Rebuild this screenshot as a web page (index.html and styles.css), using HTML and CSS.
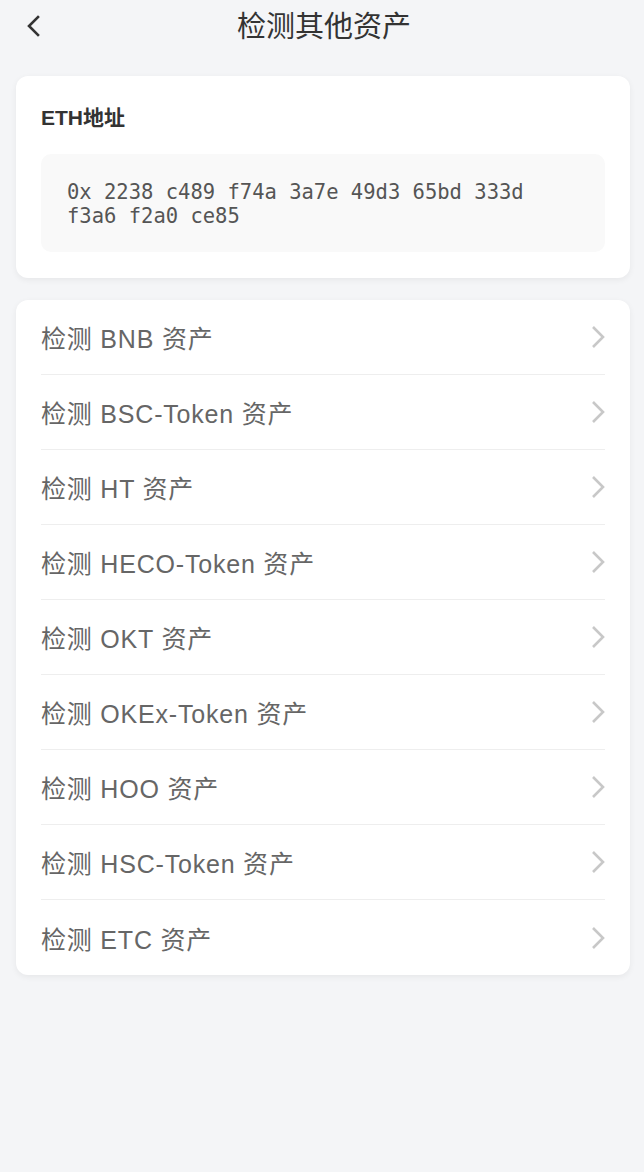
FILE: index.html
```html
<!DOCTYPE html>
<html lang="zh-CN">
<head>
    <meta charset="UTF-8">
    <meta name="viewport" content="width=device-width, initial-scale=1.0">
    <title>检测其他资产</title>
    <link rel="stylesheet" href="styles.css">
</head>
<body>
    <header class="nav-bar">
        <a class="back-btn" href="#">
            <svg width="16" height="24" viewBox="0 0 16 24">
                <path d="M12 3 L3 12 L12 21" fill="none" stroke="#333" stroke-width="2.6" stroke-linecap="square"/>
            </svg>
        </a>
        <h1 class="nav-title">检测其他资产</h1>
    </header>

    <main class="page">
        <section class="card address-card">
            <div class="address-label">ETH地址</div>
            <div class="address-box">0x 2238 c489 f74a 3a7e 49d3 65bd 333d f3a6 f2a0 ce85</div>
        </section>

        <section class="card check-list">
            <a class="check-item" href="#"><span>检测 BNB 资产</span><svg class="arrow" viewBox="0 0 14 24"><path d="M2 2 L12 12 L2 22"/></svg></a>
            <a class="check-item" href="#"><span>检测 BSC-Token 资产</span><svg class="arrow" viewBox="0 0 14 24"><path d="M2 2 L12 12 L2 22"/></svg></a>
            <a class="check-item" href="#"><span>检测 HT 资产</span><svg class="arrow" viewBox="0 0 14 24"><path d="M2 2 L12 12 L2 22"/></svg></a>
            <a class="check-item" href="#"><span>检测 HECO-Token 资产</span><svg class="arrow" viewBox="0 0 14 24"><path d="M2 2 L12 12 L2 22"/></svg></a>
            <a class="check-item" href="#"><span>检测 OKT 资产</span><svg class="arrow" viewBox="0 0 14 24"><path d="M2 2 L12 12 L2 22"/></svg></a>
            <a class="check-item" href="#"><span>检测 OKEx-Token 资产</span><svg class="arrow" viewBox="0 0 14 24"><path d="M2 2 L12 12 L2 22"/></svg></a>
            <a class="check-item" href="#"><span>检测 HOO 资产</span><svg class="arrow" viewBox="0 0 14 24"><path d="M2 2 L12 12 L2 22"/></svg></a>
            <a class="check-item" href="#"><span>检测 HSC-Token 资产</span><svg class="arrow" viewBox="0 0 14 24"><path d="M2 2 L12 12 L2 22"/></svg></a>
            <a class="check-item" href="#"><span>检测 ETC 资产</span><svg class="arrow" viewBox="0 0 14 24"><path d="M2 2 L12 12 L2 22"/></svg></a>
        </section>
    </main>
</body>
</html>
```

FILE: styles.css
```css
body {
    margin: 0;
    background-color: #f4f5f7;
    color: #333;
    font-family: "Liberation Sans", "Noto Sans CJK SC", sans-serif;
}
.nav-bar {
    position: relative;
    height: 54px;
    display: flex;
    align-items: center;
    justify-content: center;
}
.back-btn {
    position: absolute;
    left: 26px;
    top: 14px;
    display: block;
    width: 16px;
    height: 24px;
}
.back-btn svg {
    display: block;
}
.nav-title {
    margin: 0 0 0 4px;
    font-size: 29px;
    font-weight: normal;
    color: #333;
    line-height: 54px;
}
.page {
    padding: 22px 14px 22px 16px;
}
.card {
    background-color: #fff;
    border-radius: 12px;
    box-shadow: 0 2px 6px rgba(0, 0, 0, 0.06);
}
.address-card {
    padding: 28px 25px 26px;
}
.address-label {
    font-size: 21px;
    font-weight: bold;
    line-height: 28px;
    color: #333;
}
.address-box {
    margin-top: 22px;
    padding: 26px 60px 24px 26px;
    background-color: #f9f9f9;
    border-radius: 10px;
    font-family: "DejaVu Sans Mono", "Liberation Mono", monospace;
    font-size: 20.5px;
    line-height: 24px;
    color: #555;
}
.check-list {
    margin-top: 22px;
    padding: 0 25px;
}
.check-item {
    display: flex;
    align-items: center;
    justify-content: space-between;
    height: 74px;
    border-bottom: 1px solid #eeeeee;
    text-decoration: none;
    font-size: 25px;
    letter-spacing: 0.8px;
    color: #666;
}
.check-item:last-child {
    border-bottom: none;
    height: 75px;
}
.arrow {
    display: block;
    width: 14px;
    height: 24px;
    fill: none;
    stroke: #c8c8c8;
    stroke-width: 2.6;
}
```
